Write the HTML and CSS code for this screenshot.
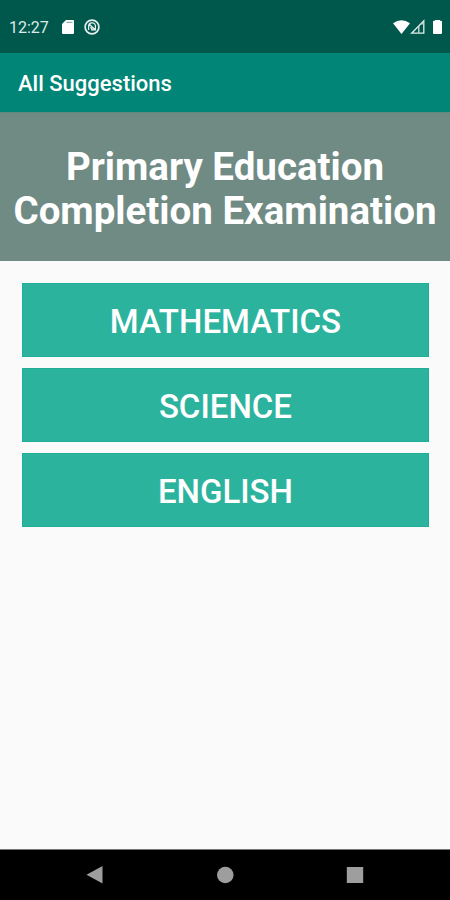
FILE: index.html
```html
<!DOCTYPE html>
<html lang="en">
<head>
    <meta charset="UTF-8">
    <meta name="viewport" content="width=device-width, initial-scale=1.0">
    <title>All Suggestions</title>
    <link rel="stylesheet" href="styles.css">
</head>
<body>
    <div class="statusbar">
        <span class="time">12:27</span>
        <svg class="sdcard" width="12" height="14" viewBox="0 0 12 14">
            <path d="M4 0h7q1 0 1 1v12q0 1-1 1H1q-1 0-1-1V4z" fill="#fff"/>
            <path d="M4.5 2.4h6" stroke="#8fb3ac" stroke-width="1.2"/>
        </svg>
        <svg class="sync" width="16" height="16" viewBox="0 0 16 16" fill="none" stroke="#e4efed">
            <circle cx="8" cy="8" r="6.9" stroke-width="1.7"/>
            <path d="M4.6 11V7.200a3.500 3.500 0 0 1 6.400-1.800M11.400 5.500v5.300H7M4.800 4.800l6.600 6.200M6.400 8.200l2.400 2.400" stroke-width="1.300"/>
        </svg>
        <div class="signals">
            <svg width="17" height="14" viewBox="0 0 17 14">
                <path d="M0 3.2Q8.5-2.6 17 3.2L8.5 14z" fill="#fff"/>
            </svg>
            <svg width="15" height="15" viewBox="0 0 15 15">
                <path d="M1.6 14.2L13.8 1.800V14.200z" fill="none" stroke="#e4efed" stroke-width="1.300"/>
                <path d="M8 8L13.500 2.500V5.500H9.500V14H8z" fill="#b5cdc9"/>
            </svg>
            <svg class="battery" width="9" height="14" viewBox="0 0 9 14">
                <path d="M2 0h5v.8h1q1 0 1 1V13q0 1-1 1H1q-1 0-1-1V1.800q0-1 1-1h1z" fill="#fff"/>
            </svg>
        </div>
    </div>

    <div class="toolbar">All Suggestions</div>

    <h1>Primary Education<br>Completion Examination</h1>

    <div class="subjects">
        <button type="button">MATHEMATICS</button>
        <button type="button">SCIENCE</button>
        <button type="button">ENGLISH</button>
    </div>

    <div class="navbar">
        <svg width="18" height="20" viewBox="0 0 18 20"><path d="M.5 9.800L16.500 1v17.600z" fill="#9e9e9e"/></svg>
        <svg width="18" height="20" viewBox="0 0 18 20"><circle cx="9.300" cy="10" r="8.300" fill="#9e9e9e"/></svg>
        <svg width="18" height="20" viewBox="0 0 18 20"><path d="M.8 2h16.400v16H.8z" fill="#9e9e9e"/></svg>
    </div>
</body>
</html>
```
FILE: styles.css
```css
* {
    box-sizing: border-box;
}
body {
    margin: 0;
    height: 900px;
    display: flex;
    flex-direction: column;
    background-color: #fafafa;
    font-family: Roboto, sans-serif;
    color: #fff;
    overflow: hidden;
}
.statusbar {
    height: 53px;
    padding: 0 8px 0 9px;
    display: flex;
    align-items: center;
    background-color: #00574b;
}
.time {
    width: 53px;
    padding-top: 1px;
    font-size: 16px;
    color: #dcebe8;
}
.sync {
    margin-left: 10px;
}
.signals {
    margin-left: auto;
    display: flex;
    align-items: center;
}
.signals .battery {
    margin-left: 8px;
}
.toolbar {
    height: 59px;
    padding: 2px 18px 0;
    display: flex;
    align-items: center;
    background-color: #008577;
    font-size: 22px;
    font-weight: 500;
}
h1 {
    margin: 0;
    height: 149px;
    padding-top: 32px;
    background-color: #6f8b84;
    border-top: 1px solid #5f8a81;
    font-size: 38.5px;
    font-weight: 700;
    line-height: 44px;
    text-align: center;
    white-space: nowrap;
}
.subjects {
    flex: 1;
    padding: 22px 21.5px 0 22.4px;
    display: flex;
    flex-direction: column;
    gap: 11px;
}
button {
    height: 74px;
    padding: 3px 0 0;
    background-color: #2cb39e;
    border: 1px solid #1fae97;
    color: white;
    font-family: inherit;
    font-size: 33px;
    font-weight: 500;
}
.navbar {
    height: 51px;
    padding: 0 86px;
    display: flex;
    align-items: center;
    justify-content: space-between;
    background-color: #000;
    border-top: 1px solid #777;
}
```
